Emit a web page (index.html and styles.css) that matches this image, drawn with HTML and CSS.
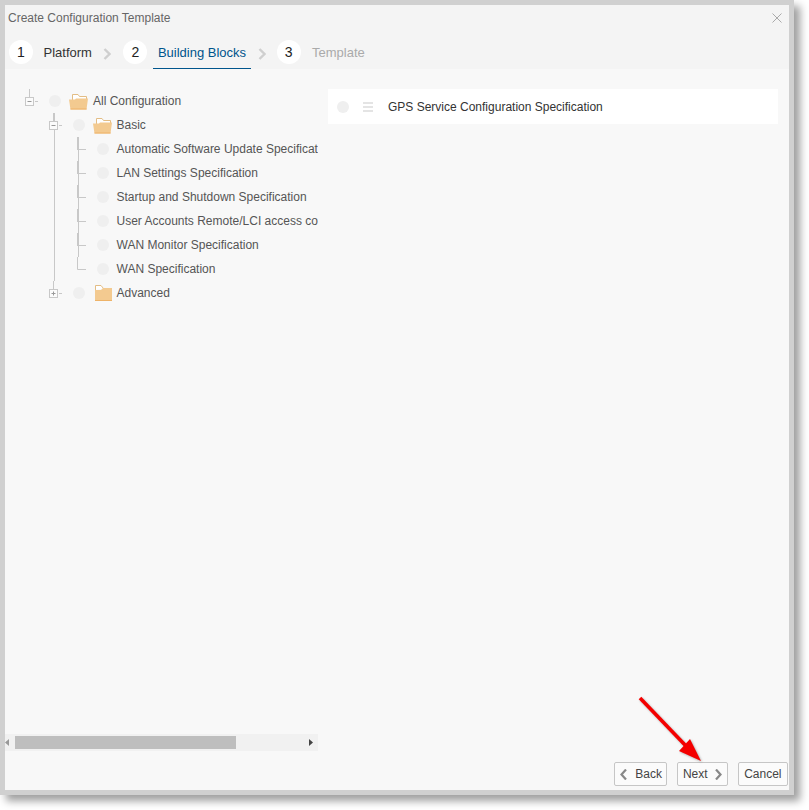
FILE: index.html
```html
<!DOCTYPE html>
<html lang="en">
<head>
<meta charset="utf-8">
<title>Create Configuration Template</title>
<link rel="stylesheet" href="styles.css">
</head>
<body>
<svg class="defs" width="0" height="0" aria-hidden="true">
  <symbol id="folder-open" viewBox="0 0 19 17">
    <path d="M3.500 8V1.500H9L10.500 3.500H17.500V9" fill="#fff" stroke="#e3bd85" stroke-width="1"/>
    <path d="M0 6.500H6L7 5.500H19L17.500 16.500H1.500Z" fill="#f3ca90"/>
    <path d="M1.500 15.500H17.600V16.500H1.500Z" fill="#eeb368"/>
  </symbol>
  <symbol id="folder-closed" viewBox="0 0 17 16">
    <path d="M0.500 5V0.500H6L8.500 3.500" fill="#fff" stroke="#e3bd85" stroke-width="1"/>
    <path d="M0 5H6L8 3H17V16H0Z" fill="#f3ca90"/>
    <path d="M0 15H17V16H0Z" fill="#eeb368"/>
  </symbol>
  <symbol id="chev" viewBox="0 0 8 12">
    <path d="M1.500 1L6.500 6L1.500 11" fill="none" stroke="#cfcfcf" stroke-width="2.400"/>
  </symbol>
</svg>
<div class="window">
  <header class="head">
    <div class="title-row">
      <span class="title">Create Configuration Template</span>
      <svg class="close" width="10" height="10" viewBox="0 0 10 10"><path d="M.5.5l9 9M9.500.5l-9 9" stroke="#aaa" stroke-width="1" fill="none"/></svg>
    </div>
    <nav class="steps">
      <span class="num">1</span><span class="tab done">Platform</span>
      <svg class="sep"><use href="#chev"/></svg>
      <span class="num">2</span><span class="tab active">Building Blocks</span>
      <svg class="sep"><use href="#chev"/></svg>
      <span class="num">3</span><span class="tab todo">Template</span>
    </nav>
  </header>

  <main class="main">
    <section class="left">
      <div class="tree">
        <div class="row">
          <svg class="guide" width="29" height="24"><path d="M9.500 0V8" class="g"/><rect x="5.500" y="8.500" width="8" height="8" class="b"/><path d="M7.500 12.500H11.500" class="m"/><path d="M15 12.500H18" class="g"/></svg>
          <span class="dot"></span>
          <svg class="folder-o l0"><use href="#folder-open"/></svg>
          <span class="label">All Configuration</span>
        </div>
        <div class="row">
          <svg class="guide" width="53" height="24"><path d="M34 0V8" class="g2"/><path d="M34.500 17V24" class="g"/><rect x="29.500" y="8.500" width="8" height="8" class="b"/><path d="M31.500 12.500H35.500" class="m"/><path d="M39 12.500H42" class="g"/></svg>
          <span class="dot"></span>
          <svg class="folder-o"><use href="#folder-open"/></svg>
          <span class="label">Basic</span>
        </div>
        <div class="row">
          <svg class="guide" width="77" height="24"><path d="M34.500 0V24" class="g"/><path d="M58 0V13" class="g2"/><path d="M58.500 13V24M58 12.500H66" class="g"/></svg>
          <span class="dot"></span>
          <span class="label leaf">Automatic Software Update Specification</span>
        </div>
        <div class="row">
          <svg class="guide" width="77" height="24"><path d="M34.500 0V24" class="g"/><path d="M58 0V13" class="g2"/><path d="M58.500 13V24M58 12.500H66" class="g"/></svg>
          <span class="dot"></span>
          <span class="label leaf">LAN Settings Specification</span>
        </div>
        <div class="row">
          <svg class="guide" width="77" height="24"><path d="M34.500 0V24" class="g"/><path d="M58 0V13" class="g2"/><path d="M58.500 13V24M58 12.500H66" class="g"/></svg>
          <span class="dot"></span>
          <span class="label leaf">Startup and Shutdown Specification</span>
        </div>
        <div class="row">
          <svg class="guide" width="77" height="24"><path d="M34.500 0V24" class="g"/><path d="M58 0V13" class="g2"/><path d="M58.500 13V24M58 12.500H66" class="g"/></svg>
          <span class="dot"></span>
          <span class="label leaf">User Accounts Remote/LCI access control</span>
        </div>
        <div class="row">
          <svg class="guide" width="77" height="24"><path d="M34.500 0V24" class="g"/><path d="M58 0V13" class="g2"/><path d="M58.500 13V24M58 12.500H66" class="g"/></svg>
          <span class="dot"></span>
          <span class="label leaf">WAN Monitor Specification</span>
        </div>
        <div class="row">
          <svg class="guide" width="77" height="24"><path d="M34.500 0V24" class="g"/><path d="M57.500 0V12.500H66" class="g"/></svg>
          <span class="dot"></span>
          <span class="label leaf">WAN Specification</span>
        </div>
        <div class="row">
          <svg class="guide" width="53" height="24"><path d="M33.500 0V8M39 12.500H42" class="g"/><rect x="29.500" y="8.500" width="8" height="8" class="b"/><path d="M31.500 12.500H35.500M33.500 10.500V14.500" class="m"/></svg>
          <span class="dot"></span>
          <svg class="folder-c"><use href="#folder-closed"/></svg>
          <span class="label">Advanced</span>
        </div>
      </div>
      <div class="hscroll">
        <svg class="arrow-l" width="4" height="7" viewBox="0 0 4 7"><path d="M4 0V7L0 3.500Z" fill="#999"/></svg>
        <span class="thumb"></span>
        <svg class="arrow-r" width="4" height="7" viewBox="0 0 4 7"><path d="M0 0V7L4 3.500Z" fill="#444"/></svg>
      </div>
    </section>
    <section class="right">
      <div class="card">
        <span class="dot"></span>
        <svg class="grip" width="10" height="10" viewBox="0 0 10 10"><path d="M0 1H10M0 5H10M0 9H10" stroke="#dcdcdc" stroke-width="1.500"/></svg>
        <span class="card-text">GPS Service Configuration Specification</span>
      </div>
    </section>
  </main>

  <footer class="foot">
    <button class="btn btn-back" type="button"><svg width="7" height="11" viewBox="0 0 7 11"><path d="M6 .5L1.500 5.500L6 10.500" fill="none" stroke="#888" stroke-width="2.200"/></svg>Back</button>
    <button class="btn btn-next" type="button">Next<svg width="7" height="11" viewBox="0 0 7 11"><path d="M1 .5L5.500 5.500L1 10.500" fill="none" stroke="#888" stroke-width="2.200"/></svg></button>
    <button class="btn btn-cancel" type="button">Cancel</button>
  </footer>

  <svg class="callout" width="72" height="74" viewBox="0 0 72 74">
    <path d="M2 2L48 50" stroke="#f40000" stroke-width="3.600" fill="none"/>
    <path d="M63 65L41 55L52 43Z" fill="#f40000"/>
  </svg>
</div>
</body>
</html>
```
FILE: styles.css
```css
* { box-sizing: border-box; }
html, body { margin: 0; padding: 0; background: #fff; }
body { font-family: "Liberation Sans", Arial, sans-serif; font-size: 12px; color: #444; min-height: 810px; }
.defs { position: absolute; }

.window {
  position: relative;
  width: 794px;
  height: 795px;
  border: 5px solid #d0d0d0;
  background: #f8f8f8;
  box-shadow: 6px 6px 8px rgba(0, 0, 0, .38);
  display: flex;
  flex-direction: column;
}

.head { background: #f4f4f4; height: 64px; flex: none; }
.title-row {
  height: 30px;
  padding: 3px 7px 0 3px;
  display: flex;
  justify-content: space-between;
  align-items: flex-start;
}
.title { color: #666; line-height: 20px; }
.close { margin-top: 5px; }

.steps { display: flex; align-items: center; height: 34px; padding-left: 4px; font-size: 13px; }
.num {
  width: 24px; height: 24px;
  border-radius: 50%;
  background: #fff;
  color: #222;
  font-size: 14px;
  display: flex; align-items: center; justify-content: center;
  margin-right: 5.500px;
}
.tab { height: 34px; line-height: 35px; padding: 0 5px; }
.done { color: #333; }
.active { color: #00558c; border-bottom: 1px solid #00558c; }
.todo { color: #aaa; margin-left: 1px; }
.sep { width: 8px; height: 12px; margin: 3px 12px 0 6.500px; }
.active + .sep { margin-right: 11px; }

.main { flex: 1; display: flex; min-height: 0; }
.left { width: 313px; flex: none; display: flex; flex-direction: column; overflow: hidden; }
.tree { padding: 20px 0 0 15px; flex: 1; }
.row { display: flex; align-items: center; height: 24px; white-space: nowrap; }
.guide { flex: none; }
.g { stroke: #c8c8c8; stroke-width: 1; fill: none; }
.g2 { stroke: #c8c8c8; stroke-width: 2; fill: none; }
.b { stroke: #c8c8c8; stroke-width: 1; fill: #fbfbfb; }
.m { stroke: #999; stroke-width: 1; fill: none; }
.dot { width: 12px; height: 12px; border-radius: 50%; background: #efefef; flex: none; }
.folder-o { width: 19px; height: 17px; margin: 0 4.500px 0 8px; flex: none; }
.folder-o.l0 { margin: 0 5px 0 8px; }
.folder-c { width: 17px; height: 16px; margin: 0 4.500px 0 10px; flex: none; }
.label { color: #555; line-height: 24px; }
.leaf { margin-left: 7.500px; }

.hscroll { height: 17px; flex: none; background: #f1f1f1; display: flex; align-items: center; }
.arrow-l { margin-left: 1px; flex: none; transform: translateX(-1px); }
.thumb { width: 221px; height: 13px; background: #bebebe; margin-left: 5px; flex: none; }
.arrow-r { margin-left: auto; margin-right: 5px; flex: none; }

.right { flex: 1; padding: 20px 11px 0 10px; }
.card { height: 35px; background: #fff; display: flex; align-items: center; padding-left: 9px; }
.grip { margin: 0 15px 0 14px; flex: none; }
.card-text { color: #333; }

.foot {
  flex: none;
  height: 39px;
  padding: 11px 1px 4px 0;
  display: flex;
  justify-content: flex-end;
  gap: 10px;
}
.btn {
  height: 24px;
  padding: 0 5px;
  border: 1px solid #c6c6c6;
  border-radius: 2px;
  background: #fbfbfb;
  color: #444;
  font: 12px "Liberation Sans", Arial, sans-serif;
  display: flex;
  align-items: center;
}
.btn-back { padding-right: 4px; }
.btn-back svg { margin-right: 8px; }
.btn-next svg { margin-left: 7px; }
.btn-cancel { padding: 0 5.500px; }

.callout { position: absolute; left: 633px; top: 691px; filter: drop-shadow(1px 1px 1px rgba(0,0,0,.3)); }
```
